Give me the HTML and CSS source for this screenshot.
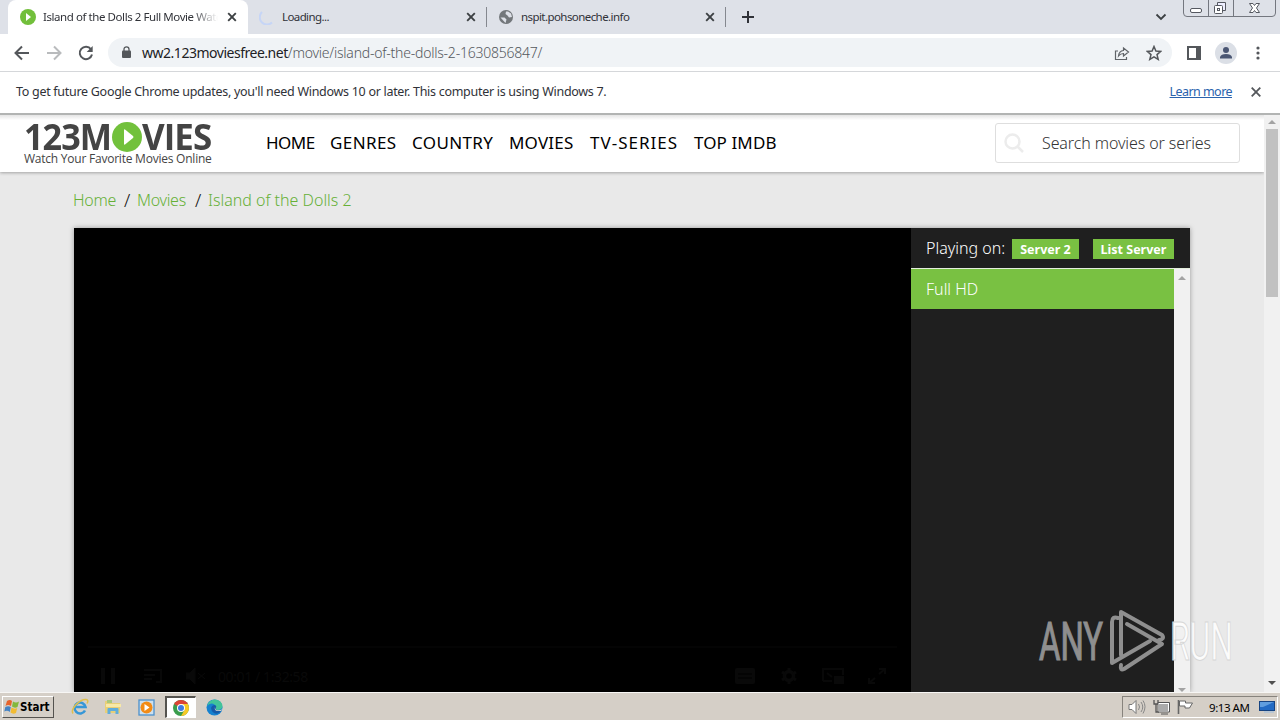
FILE: index.html
```html
<!DOCTYPE html>
<html lang="en">
<head>
<meta charset="utf-8">
<title>Island of the Dolls 2 Full Movie Watch</title>
<link rel="stylesheet" href="styles.css">
</head>
<body>
<div class="tabstrip">
  <div class="tab active">
    <svg class="fav" width="16" height="16" viewBox="0 0 16 16"><circle cx="8" cy="8" r="8" fill="#72bf3b"/><path d="M6 4l5 4-5 4z" fill="#fff"/></svg>
    <span class="tab-title t1">Island of the Dolls 2 Full Movie Watch</span>
    <svg class="close" width="10" height="10" viewBox="0 0 10 10"><path d="M1.2 1.2l7.6 7.6M8.8 1.2L1.2 8.8"/></svg>
  </div>
  <div class="tab second">
    <svg class="fav" width="16" height="16" viewBox="0 0 16 16"><path d="M3 3A7 7 0 0 0 13 13.500" fill="none" stroke="#c6d5f6" stroke-width="2"/></svg>
    <span class="tab-title t2">Loading...</span>
    <svg class="close" width="10" height="10" viewBox="0 0 10 10"><path d="M1.2 1.2l7.6 7.6M8.8 1.2L1.2 8.8"/></svg>
  </div>
  <div class="tab third">
    <svg class="fav" width="16" height="16" viewBox="0 0 16 16"><circle cx="8" cy="8" r="7" fill="#73777b"/><path d="M2.500 8.500h4l2 2-1 3.500M8 2.500L7.500 5l2 1.500 1.500 2 3-.5-1-3.500-3-2z" fill="#dee1e8"/></svg>
    <span class="tab-title t3">nspit.pohsoneche.info</span>
    <svg class="close" width="10" height="10" viewBox="0 0 10 10"><path d="M1.2 1.2l7.6 7.6M8.800 1.2L1.2 8.8"/></svg>
  </div>
  <svg class="plus" width="12" height="12" viewBox="0 0 12 12"><path d="M6 0v12M0 6h12" stroke="#303238" stroke-width="2"/></svg>
  <svg class="chev" width="12" height="8" viewBox="0 0 12 8"><path d="M1.500 1.500L6 6l4.500-4.500" fill="none" stroke="#3c4043" stroke-width="1.800"/></svg>
  <svg class="winbtns" width="94" height="18" viewBox="0 0 94 18"><path d="M.5 0v13q0 3.500 3.500 3.500h85q3.500 0 3.500-3.500V0M25.500 0v16M50.500 0v16" fill="none" stroke="#74777f"/><rect x="7.500" y="8.500" width="11" height="4" rx="1.500" fill="#fff" stroke="#555860"/><path d="M34.500 5.500V2.500h8v8h-3" fill="#eef" stroke="#555860"/><rect x="31.500" y="5.500" width="8" height="8" rx="1" fill="#fff" stroke="#555860"/><rect x="34.500" y="8.500" width="2" height="2" fill="none" stroke="#555860"/><path d="M66.500 3.500h3.500l1.500 2 1.500-2h3.500l-3 4.500 3 4.500H73l-1.500-2-1.500 2h-3.500l3-4.500z" fill="#fff" stroke="#555860"/></svg>
</div>

<div class="toolbar">
  <svg class="nav" width="16" height="16" viewBox="0 0 16 16"><path d="M15 8H2M8 1.500L1.500 8 8 14.500" fill="none" stroke="#54575b" stroke-width="2"/></svg>
  <svg class="nav" width="16" height="16" viewBox="0 0 16 16"><path d="M1 8h13M8 1.500L14.500 8 8 14.500" fill="none" stroke="#b9bbbd" stroke-width="2"/></svg>
  <svg class="nav" width="16" height="16" viewBox="0 0 16 16"><path d="M13 4.300A6.200 6.200 0 1 0 14 9.500" fill="none" stroke="#54575b" stroke-width="2"/><path d="M14.700 1v6H8.700z" fill="#54575b"/></svg>
  <div class="omnibox">
    <svg width="10" height="13" viewBox="0 0 10 13"><rect x="1" y="4.500" width="9" height="7.500" rx="1" fill="#54575b"/><path d="M3 5V3.300a2.500 2.500 0 0 1 5 0V5" fill="none" stroke="#54575b" stroke-width="1.300"/></svg>
    <span class="url"><b>ww2.123moviesfree.net</b>/movie/island-of-the-dolls-2-1630856847/</span>
    <svg class="share" width="16" height="16" viewBox="0 0 16 16"><path d="M4 6H1.500v8.500h11V12M4.500 11Q5 6 9.500 5.500V3l5 4-5 4V8.500Q6.500 8.500 4.500 11z" fill="none" stroke="#5f6368" stroke-width="1.200"/></svg>
    <svg class="star" width="16" height="16" viewBox="0 0 16 16"><path d="M8 1.500l1.900 4.500 4.800.4-3.700 3.200 1.200 4.800L8 11.800l-4.200 2.600L5 9.600 1.300 6.400 6.100 6z" fill="none" stroke="#54575b" stroke-width="1.500"/></svg>
  </div>
  <svg class="panel" width="14" height="14" viewBox="0 0 14 14"><rect x="1" y="1" width="12" height="12" fill="none" stroke="#54575b" stroke-width="2"/><path d="M9 1h4v12H9z" fill="#54575b"/></svg>
  <svg class="avatar" width="22" height="22" viewBox="0 0 22 22"><circle cx="11" cy="11" r="11" fill="#dbdfe6"/><circle cx="11" cy="8" r="3" fill="#4a5673"/><path d="M5 16.500V15q1-3 6-3t6 3v1.500z" fill="#4a5673"/></svg>
  <svg class="dots" width="4" height="14" viewBox="0 0 4 14"><g fill="#54575b"><circle cx="2" cy="2" r="1.600"/><circle cx="2" cy="7" r="1.600"/><circle cx="2" cy="12" r="1.600"/></g></svg>
</div>

<div class="infobar">
  <span class="info-text">To get future Google Chrome updates, you'll need Windows 10 or later. This computer is using Windows 7.</span>
  <span class="learn">Learn more</span>
  <svg width="10" height="10" viewBox="0 0 10 10"><path d="M.7.7l8.600 8.600M9.300.7L.7 9.300" stroke="#54575b" stroke-width="1.800"/></svg>
</div>

<div class="viewport">
  <div class="page">
    <header class="site">
      <div class="logo">
        <div class="logo-main"><span class="l1">123M</span><svg width="30" height="30" viewBox="0 0 30 30"><circle cx="15" cy="15" r="15" fill="#72c13c"/><path d="M12 8v14q0 1 1 .5l8-6.500q1-1 0-2l-8-6.500q-1-.5-1 .5z" fill="#fff"/></svg><span class="l2">VIES</span></div>
        <div class="logo-sub">Watch Your Favorite Movies Online</div>
      </div>
      <nav><a class="n1">HOME</a><a class="n2">GENRES</a><a class="n3">COUNTRY</a><a class="n4">MOVIES</a><a class="n5">TV-SERIES</a><a class="n6">TOP IMDB</a></nav>
      <div class="search">
        <svg width="20" height="20" viewBox="0 0 20 20"><circle cx="8.500" cy="8.500" r="7" fill="none" stroke="#ececec" stroke-width="2.500"/><path d="M13.500 13.500l5.500 5.500" stroke="#ececec" stroke-width="2.500"/></svg>
        <span>Search movies or series</span>
      </div>
    </header>
    <div class="crumbs"><a class="c1">Home</a><i>/</i><a class="c2">Movies</a><i>/</i><a class="c3">Island of the Dolls 2</a></div>
    <div class="player">
      <div class="video">
        <div class="progress"></div>
        <div class="controls">
          <svg width="14" height="16" viewBox="0 0 14 16"><path d="M2 0v16M12 0v16" stroke="#090909" stroke-width="4"/></svg>
          <svg width="20" height="16" viewBox="0 0 20 16"><path d="M1 2h17v12h-5M1 7h11M1 11h8" fill="none" stroke="#080808" stroke-width="2"/></svg>
          <svg class="mute" width="20" height="16" viewBox="0 0 20 16"><path d="M0 5h4l5-5v16l-5-5H0zM12 5l7 6M19 5l-7 6" fill="#090909" stroke="#090909"/></svg>
          <span>00:01 / 1:32:58</span>
          <svg class="cc" width="20" height="16" viewBox="0 0 20 16"><rect width="20" height="16" rx="2" fill="#090909"/><path d="M3 6h14M3 10h14" stroke="#000"/></svg>
          <svg class="gear" width="16" height="16" viewBox="0 0 16 16"><circle cx="8" cy="8" r="4.500" fill="none" stroke="#090909" stroke-width="3.500"/><path d="M8 0v3M8 13v3M1 4l3 2M12 10l3 2M1 12l3-2M12 6l3-2" stroke="#090909" stroke-width="3"/></svg>
          <svg class="pip" width="22" height="16" viewBox="0 0 22 16"><path d="M1 13V1h20v6M1 13h9M5 5l5 4" fill="none" stroke="#080808" stroke-width="2"/><rect x="12" y="8" width="10" height="8" fill="#090909"/></svg>
          <svg class="full" width="18" height="16" viewBox="0 0 18 16"><path d="M11 1h6v5M17 1l-6 5M1 10v5h6M1 15l6-5" fill="none" stroke="#090909" stroke-width="2"/></svg>
        </div>
      </div>
      <aside>
        <div class="playing"><span class="on">Playing on:</span><span class="btn b1"><em>Server 2</em></span><span class="btn b2"><em>List Server</em></span></div>
        <div class="list">
          <div class="items"><div class="item"><span>Full HD</span></div></div>
          <div class="inner-scroll"><svg width="8" height="4" viewBox="0 0 8 4"><path d="M4 0l4 4H0z" fill="#a3a3a3"/></svg><svg width="8" height="4" viewBox="0 0 8 4"><path d="M0 0h8L4 4z" fill="#a3a3a3"/></svg></div>
        </div>
      </aside>
    </div>
  </div>
  <div class="scrollbar"><svg width="8" height="4" viewBox="0 0 8 4"><path d="M4 0l4 4H0z" fill="#a3a3a3"/></svg><div class="thumb"></div><svg class="down" width="8" height="4" viewBox="0 0 8 4"><path d="M0 0h8L4 4z" fill="#505050"/></svg></div>
  <svg class="watermark" width="220" height="74" viewBox="0 0 220 74">
    <g class="wm-text"><text x="8" y="54" textLength="64" lengthAdjust="spacingAndGlyphs" fill="#8f8f8f" stroke="#8f8f8f" stroke-width="1.200">ANY</text><text x="139" y="54" textLength="63" lengthAdjust="spacingAndGlyphs" fill="#fff" fill-opacity=".85" stroke="#d6d6d6" stroke-width="1">RUN</text></g>
    <g fill="none" stroke="#8f8f8f" stroke-width="4" stroke-linejoin="round" stroke-linecap="round"><path d="M87 12q-6-2-6 4v41l38-22"/><path d="M90 49V6l41 23q3 4-3 5"/><path d="M96 18l35 20-38 25q-4 2-3-4"/></g>
  </svg>
</div>

<div class="taskbar">
  <div class="start">
    <svg width="16" height="16" viewBox="0 0 16 16"><path d="M3 2q3-2 5 0L7 7Q4 5 1.500 7z" fill="#e7642c"/><path d="M9 2.500q3 2 6 0L13.500 8q-3 1.500-5.500-.5z" fill="#83b83d"/><path d="M1.300 8q3-1.500 5.500 0l-1 5q-2.500-2-5.500-.5z" fill="#4583c4"/><path d="M7.500 8.500q3 2 5.700.5L12 14q-3 1.500-5.500-.5z" fill="#f2bb32"/></svg>
    <span>Start</span>
  </div>
  <svg class="ie" width="18" height="18" viewBox="0 0 18 18"><path d="M14 12.500A5.500 5.500 0 1 1 14.500 9H5" fill="none" stroke="#3697d7" stroke-width="2.600"/><path d="M2 15.500C-1 11 9 1 15 1.500q3 .5 1 4" fill="none" stroke="#dfbf4c" stroke-width="1.500"/></svg>
  <svg class="folder" width="18" height="18" viewBox="0 0 18 18"><path d="M1 3h6l1 2h8v10H1z" fill="#e8cf77"/><path d="M3 2h5v3H3z" fill="#a9c77c"/><path d="M2 6h15v3H2z" fill="#f8e9a6"/><path d="M3.500 16v-5q0-1 1-1h9q1 0 1 1v5h-3v-3h-5v3z" fill="#60addb"/></svg>
  <svg class="wmp" width="17" height="17" viewBox="0 0 17 17"><rect x="1" y="1" width="15" height="15" fill="#cde0ee" stroke="#4c91cc" stroke-width="1.300"/><circle cx="8.500" cy="8.500" r="6" fill="#f28b16"/><path d="M6.500 5l5 3.500-5 3.500z" fill="#fff"/></svg>
  <div class="task-active"><svg width="16" height="16" viewBox="0 0 16 16"><circle cx="8" cy="8" r="8" fill="#3a9d4d"/><path d="M8 8L1.100 4a8 8 0 0 1 13.800 0z" fill="#dc4335"/><path d="M8 4h6.900A8 8 0 0 1 8 16l3.500-6z" fill="#f7c924"/><circle cx="8" cy="8" r="4" fill="#fff"/><circle cx="8" cy="8" r="3" fill="#3e7be0"/></svg></div>
  <svg class="edge" width="17" height="17" viewBox="0 0 17 17"><circle cx="8.500" cy="8.500" r="8" fill="#1681cf"/><path d="M1 7Q3 .5 9 .5q7 .5 7.500 7Q16 11 11 11q-2-.5-1-3-1-3.500-4.500-3.500Q3 4.500 1 7z" fill="#42c39a"/><path d="M5 9q1-3 4-3 2 1 1 3-1 3 5 3-3 4-7 2-3-2-3-5z" fill="#165aa9"/><path d="M9 8q-1 3 2 4h4l1.500-2q-2 1.500-5 1.200Q9 11 9 8z" fill="#d6d0c8"/></svg>
  <div class="tray">
    <svg width="18" height="16" viewBox="0 0 18 16"><path d="M1 5.500h3L8 1.500v13l-4-4H1z" fill="#fff" stroke="#777"/><path d="M10.500 5q2 3 0 6M13 3q3.500 5 0 10M15 1.500q4 6 0 13" fill="none" stroke="#888"/></svg>
    <svg width="17" height="16" viewBox="0 0 17 16"><path d="M1 1v4h2v8h3M5 1v4H3" fill="none" stroke="#555" stroke-width="1.300"/><rect x="5.500" y="4.500" width="10" height="8" fill="#aaa" stroke="#fff"/><path d="M5 3.500h11.500v9.500H5zM8 15h7" fill="none" stroke="#555"/></svg>
    <svg width="17" height="16" viewBox="0 0 17 16"><path d="M1.500 1v14" stroke="#666" stroke-width="1.600"/><path d="M2.500 2h6v2h7l-3 5H8V7H2.500z" fill="#fff" stroke="#666"/></svg>
    <span>9:13 AM</span>
    <svg class="desk" width="16" height="14" viewBox="0 0 16 14"><rect x=".5" y="1.500" width="15" height="9" fill="#236bc4" stroke="#174482"/><path d="M1 2h14L4 7H1z" fill="#609edf"/><path d="M5 12h10" stroke="#b9c6d3" stroke-width="2"/></svg>
  </div>
</div>
</body>
</html>
```
FILE: styles.css
```css
* { box-sizing: border-box; }
body {
  margin: 0; width: 1280px; height: 720px; overflow: hidden;
  display: flex; flex-direction: column;
  font-family: "Noto Sans", "Open Sans", sans-serif; font-size: 12px; color: #303238;
  white-space: nowrap; background: #e9e9e9;
}
svg { display: block; flex: none; }
span, a { flex: none; }

.tabstrip { height: 34px; background: #dee1e8; display: flex; align-items: center; padding-left: 8px; flex: none; }
.tab { height: 34px; display: flex; align-items: center; flex: none; width: 239px; padding: 0 11px 0 12px; }
.tab.active { width: 240px; background: #fff; border-radius: 8px 8px 0 0; }
.tab.second { padding-left: 11px; background: linear-gradient(#85888f, #85888f) right center / 1px 20px no-repeat; }
.tab.third { padding-left: 11px; background: linear-gradient(#85888f, #85888f) right center / 1px 20px no-repeat; }
.tab-title { margin-left: 7px; width: 175px; overflow: hidden; font-size: 11.500px; line-height: 18px; }
.active .tab-title { -webkit-mask-image: linear-gradient(90deg, #000 85%, transparent); mask-image: linear-gradient(90deg, #000 85%, transparent); letter-spacing: -0.43px; }
.t2 { letter-spacing: -0.6px; }
.t3 { letter-spacing: -0.57px; }
.close { margin-left: auto; stroke: #3c4043; stroke-width: 1.9px; }
.plus { margin-left: 16px; }
.chev { margin-left: 401px; }
.winbtns { align-self: flex-start; margin-left: 16px; }

.toolbar { height: 37px; background: #fff; display: flex; align-items: center; padding-left: 14px; flex: none; }
.nav { margin-right: 16px; }
.omnibox { width: 1064px; height: 29px; margin-left: -2px; border-radius: 15px; background: #f0f3f6; display: flex; align-items: center; padding: 0 10px 0 13px; }
.url { margin-left: 11px; font-size: 14px; font-weight: 300; color: #54585d; letter-spacing: -0.23px; }
.url b { font-weight: 400; color: #202124; letter-spacing: -0.48px; }
.share { margin-left: auto; }
.star { margin-left: 16px; }
.panel { margin-left: 15px; }
.avatar { margin-left: 14px; }
.dots { margin-left: 19px; }

.infobar { height: 42px; background: #fff; border-top: 1px solid #d5d7da; display: flex; align-items: center; padding: 0 19px 2px 16px; font-size: 12.500px; flex: none; }
.info-text { letter-spacing: -0.29px; }
.learn { margin-left: auto; margin-right: 19px; color: #2a62ad; text-decoration: underline; letter-spacing: -0.55px; }
.info-text, .learn { margin-top: -1px; }

.viewport { position: relative; height: 579px; display: flex; flex: none; overflow: hidden; border-top: 2px solid #b2b4b3; }
.page { width: 1264px; background: #e9e9e9; }
.site { height: 57px; background: linear-gradient(#e4e4e4, #fff 5px); box-shadow: 0 1px 3px rgba(0,0,0,.3); display: flex; align-items: flex-start; }
.logo { width: 190px; margin-left: 24px; padding-top: 7px; color: #444; }
.logo-main { display: flex; height: 30px; align-items: center; font: 700 36px/30px "Open Sans", sans-serif; }
.l1 { width: 88px; letter-spacing: -1px; transform: scaleX(.95); transform-origin: left; }
.l2 { letter-spacing: -1px; transform: scaleX(.97); transform-origin: left; }
.logo-sub { font: 12px/14px "Open Sans", sans-serif; letter-spacing: -0.23px; }
nav { display: flex; margin-left: 52px; padding-top: 17px; font-size: 17px; line-height: 22px; color: #000; }
.n1 { width: 64px; letter-spacing: -.5px; }
.n2 { width: 82px; letter-spacing: .4px; }
.n3 { width: 97px; letter-spacing: .35px; }
.n4 { width: 81px; letter-spacing: .2px; }
.n5 { width: 104px; letter-spacing: 1px; }
.n6 { width: 90px; letter-spacing: .1px; }
.search { width: 245px; height: 40px; margin: 8px 24px 0 auto; border: 1px solid #dedede; border-radius: 3px; display: flex; align-items: center; padding-left: 8px; background: #fff; font-size: 16px; font-weight: 300; color: #333; }
.search span { margin-left: 18px; letter-spacing: -.1px; }
.crumbs { display: flex; height: 56px; padding: 16px 0 0 73px; font-size: 16px; line-height: 24px; color: #66b037; font-weight: 300; }
.crumbs i { width: 21px; padding-left: 8px; color: #111; font-style: normal; font-size: 18px; flex: none; }
.c1 { width: 43px; letter-spacing: -.3px; } .c2 { width: 50px; letter-spacing: -.3px; }
.player { width: 1116px; height: 464px; margin-left: 74px; display: flex; box-shadow: 0 0 5px rgba(0,0,0,.35); }
.video { width: 837px; background: #000; padding: 418px 14px 0; }
.progress { height: 2px; background: #040404; }
.controls { display: flex; height: 56px; align-items: center; padding: 0 11px 0 13px; gap: 28px; color: #090909; font-size: 14px; }
.controls span { margin-left: -16px; letter-spacing: -.4px; }
.cc { margin-left: auto; }
.gear { margin-left: -2px; }
.pip { margin-left: -3px; }
.full { margin-left: -4px; }
.mute { margin-left: -5px; }
aside { width: 279px; background: #1f1f1f; }
.playing { height: 40px; display: flex; align-items: center; padding-left: 15px; color: #fff; }
.on { width: 86px; font-size: 16px; font-weight: 300; }
.btn { height: 20px; margin-top: 2px; background: #79c142; display: flex; align-items: center; justify-content: center; font-size: 12.500px; font-weight: 700; }
.btn em { font-style: normal; }
.b1 { width: 67px; } .b2 { width: 81px; margin-left: 14px; }
.list { height: 424px; display: flex; border-top: 1px solid #e4eedc; }
.items { width: 263px; }
.item { height: 40px; background: #79c142; color: #fff; font-size: 16px; line-height: 40px; padding-left: 15px; font-weight: 300; }
.inner-scroll { width: 16px; background: #f1f1f1; display: flex; flex-direction: column; align-items: center; justify-content: space-between; padding: 7px 0 0; }
.scrollbar { width: 16px; background: #f1f1f1; display: flex; flex-direction: column; align-items: center; padding: 5px 0 7px; }
.thumb { width: 12px; height: 168px; background: #c1c1c1; margin-top: 5px; }
.down { margin-top: auto; }
.watermark { position: absolute; left: 1031px; top: 491px; }
.wm-text { font: 53px "Roboto", sans-serif; }

.taskbar { height: 28px; background: #d5cfc7; border-top: 1px solid #f7f6f4; display: flex; align-items: center; padding: 1px 2px 0; flex: none; }
.start { width: 52px; height: 22px; border: 1px solid; border-color: #fff #55534f #55534f #fff; display: flex; align-items: center; padding-left: 1px; font: 700 11.500px "DejaVu Sans Condensed", "DejaVu Sans", sans-serif; color: #000; }
.ie { margin-left: 17px; } .folder { margin-left: 15px; } .wmp { margin-left: 16px; }
.task-active { width: 31px; height: 22px; margin-left: 10px; background: #fff; border: 1px solid; border-width: 2px 1px 1px 2px; border-color: #55534f #fff #fff #55534f; display: flex; align-items: center; justify-content: center; }
.edge { margin-left: 10px; }
.tray { width: 156px; height: 22px; margin-left: auto; border: 1px solid; border-color: #87837d #fff #fff #87837d; display: flex; align-items: center; padding: 0 2px 0 5px; gap: 7px; color: #000; font-size: 11.500px; }
.tray span { margin-left: 8px; letter-spacing: -.45px; }
.desk { margin-left: auto; }
```
